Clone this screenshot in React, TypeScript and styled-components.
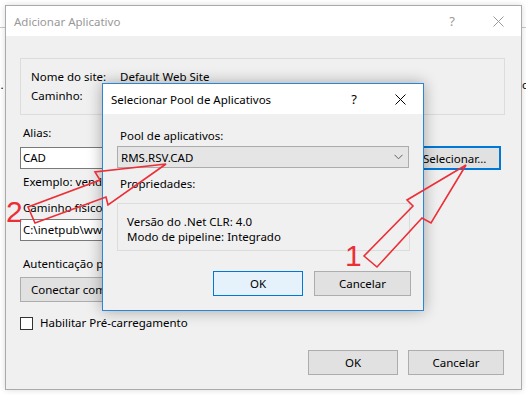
import styled, { createGlobalStyle } from "styled-components";

const GlobalStyle = createGlobalStyle`
  html, body {
    margin: 0;
    padding: 0;
    background: #ffffff;
  }
  body {
    font-family: "Noto Sans", "Open Sans", sans-serif;
    font-size: 11.5px;
    color: #000;
  }
`;

const Desktop = styled.div`
  position: relative;
  width: 526px;
  height: 395px;
  overflow: hidden;
  background: #ffffff;
`;

const BackWindow = styled.div`
  position: absolute;
  left: -20px;
  top: 27px;
  width: 570px;
  height: 400px;
  border-top: 1px solid #c8c8c8;
  background: #ffffff;
`;

const BackText = styled.span<{ $left: number }>`
  position: absolute;
  top: 77px;
  left: ${({ $left }) => $left}px;
  line-height: 16px;
`;

const Window = styled.div<{ $active?: boolean }>`
  position: absolute;
  display: flex;
  flex-direction: column;
  box-sizing: border-box;
  background: #f0f0f0;
  border: 1px solid ${({ $active }) => ($active ? "#2b86d8" : "#aaaaaa")};
  box-shadow: ${({ $active }) =>
    $active ? "0 0 14px rgba(0, 0, 0, 0.32)" : "0 0 6px rgba(0, 0, 0, 0.15)"};
`;

const MainWindow = styled(Window)`
  left: 5px;
  top: 5px;
  width: 517px;
  height: 385px;
`;

const PoolWindow = styled(Window)`
  left: 102px;
  top: 83px;
  width: 322px;
  height: 228px;
`;

const TitleBar = styled.div<{ $active?: boolean }>`
  display: flex;
  align-items: center;
  height: 30px;
  flex-shrink: 0;
  background: #ffffff;
  color: ${({ $active }) => ($active ? "#000" : "#999")};
`;

const Title = styled.span`
  flex: 1;
  padding-left: 8px;
  font-size: 11.5px;
`;

const CaptionButton = styled.div`
  width: 46px;
  height: 30px;
  display: flex;
  align-items: center;
  justify-content: center;
  font-size: 13px;
`;

const Body = styled.div<{ $pad: string }>`
  display: flex;
  flex-direction: column;
  flex: 1;
  padding: ${({ $pad }) => $pad};
`;

const GroupBox = styled.div`
  display: grid;
  grid-template-columns: 89px 1fr;
  grid-auto-rows: 19px;
  align-items: center;
  width: 485px;
  height: 57px;
  box-sizing: border-box;
  padding: 8px 0 0 10px;
  border: 1px solid #dcdcdc;
`;

const Label = styled.div<{ $top: number; $indent?: number }>`
  margin-top: ${({ $top }) => $top}px;
  padding-left: ${({ $indent }) => $indent ?? 3}px;
  line-height: 16px;
  white-space: nowrap;
`;

const Row = styled.div<{ $top: number }>`
  display: flex;
  align-items: center;
  gap: 10px;
  margin-top: ${({ $top }) => $top}px;
`;

const TextBox = styled.div<{ $width: number }>`
  width: ${({ $width }) => $width}px;
  height: 22px;
  box-sizing: border-box;
  border: 1px solid #7a7a7a;
  background: #ffffff;
  padding-left: 2px;
  line-height: 20px;
  white-space: nowrap;
  overflow: hidden;
`;

const Button = styled.div<{
  $width: number;
  $height?: number;
  $focus?: "strong" | "soft";
  $align?: "left" | "center";
}>`
  width: ${({ $width }) => $width}px;
  height: ${({ $height }) => $height ?? 24}px;
  box-sizing: border-box;
  display: flex;
  align-items: center;
  justify-content: ${({ $align }) => ($align === "left" ? "flex-start" : "center")};
  padding-left: ${({ $align }) => ($align === "left" ? "1px" : "0")};
  white-space: nowrap;
  background: ${({ $focus }) => ($focus === "soft" ? "#e5f1fb" : "#e1e1e1")};
  border: ${({ $focus }) =>
    $focus === "strong"
      ? "2px solid #0078d7"
      : $focus === "soft"
      ? "1px solid #0078d7"
      : "1px solid #adadad"};
`;

const ButtonBar = styled.div<{ $top: number; $right: number; $gap: number }>`
  display: flex;
  justify-content: flex-end;
  gap: ${({ $gap }) => $gap}px;
  margin-top: ${({ $top }) => $top}px;
  padding-right: ${({ $right }) => $right}px;
`;

const CheckRow = styled.label`
  display: flex;
  align-items: center;
  gap: 7px;
  margin-top: 13px;
  line-height: 16px;
`;

const CheckBox = styled.span`
  width: 13px;
  height: 13px;
  box-sizing: border-box;
  border: 1px solid #333333;
  background: #ffffff;
`;

const Select = styled.div`
  display: flex;
  align-items: center;
  justify-content: space-between;
  width: 292px;
  height: 22px;
  box-sizing: border-box;
  margin-top: 2px;
  padding: 0 5px 0 3px;
  background: #e5e5e5;
  border: 1px solid #acacac;
`;

const PropsBox = styled.div`
  width: 293px;
  height: 48px;
  box-sizing: border-box;
  margin-top: 11px;
  padding: 10px 0 0 9px;
  border: 1px solid #dcdcdc;
  line-height: 15px;
`;

const Overlay = styled.svg`
  position: absolute;
  left: 0;
  top: 0;
  pointer-events: none;
`;

const CloseIcon = () => (
  <svg width="11" height="11" viewBox="0 0 11 11">
    <path d="M0.5 0.5 L10.5 10.5 M10.5 0.5 L0.5 10.5" stroke="currentColor" strokeWidth="1" />
  </svg>
);

const Chevron = () => (
  <svg width="9" height="6" viewBox="0 0 9 6">
    <path d="M0.5 0.8 L4.5 4.8 L8.5 0.8" fill="none" stroke="#606060" strokeWidth="1" />
  </svg>
);

export default function App() {
  return (
    <>
      <GlobalStyle />
      <Desktop>
        <BackWindow />
        <BackText $left={-6}>a.</BackText>
        <BackText $left={522}>c</BackText>

        <MainWindow>
          <TitleBar>
            <Title>Adicionar Aplicativo</Title>
            <CaptionButton>?</CaptionButton>
            <CaptionButton>
              <CloseIcon />
            </CaptionButton>
          </TitleBar>
          <Body $pad="22px 0 0 14px">
            <GroupBox>
              <span>Nome do site:</span>
              <span>Default Web Site</span>
              <span>Caminho:</span>
              <span />
            </GroupBox>

            <Label $top={10}>Alias:</Label>
            <Row $top={5}>
              <TextBox $width={390}>CAD</TextBox>
              <Button $width={81} $height={24} $focus="strong" $align="left">
                Selecionar...
              </Button>
            </Row>
            <Label $top={4}>Exemplo: vendas</Label>

            <Label $top={10}>Caminho físico:</Label>
            <Row $top={3}>
              <TextBox $width={300}>C:\inetpub\wwwroot</TextBox>
            </Row>

            <Label $top={15}>Autenticação passada</Label>
            <Row $top={5}>
              <Button $width={130} $height={25} $align="left">
                &nbsp;&nbsp;&nbsp;Conectar como...
              </Button>
            </Row>

            <CheckRow>
              <CheckBox />
              Habilitar Pré-carregamento
            </CheckRow>

            <ButtonBar $top={19} $right={17} $gap={10}>
              <Button $width={90} $height={25}>OK</Button>
              <Button $width={96} $height={25}>Cancelar</Button>
            </ButtonBar>
          </Body>
        </MainWindow>

        <PoolWindow $active>
          <TitleBar $active>
            <Title>Selecionar Pool de Aplicativos</Title>
            <CaptionButton>?</CaptionButton>
            <CaptionButton>
              <CloseIcon />
            </CaptionButton>
          </TitleBar>
          <Body $pad="14px 0 0 14px">
            <Label $top={0}>Pool de aplicativos:</Label>
            <Select>
              <span>RMS.RSV.CAD</span>
              <Chevron />
            </Select>
            <Label $top={8}>Propriedades:</Label>
            <PropsBox>
              <div>Versão do .Net CLR: 4.0</div>
              <div>Modo de pipeline: Integrado</div>
            </PropsBox>
            <ButtonBar $top={20} $right={12} $gap={11}>
              <Button $width={90} $height={25} $focus="soft">OK</Button>
              <Button $width={97} $height={25}>Cancelar</Button>
            </ButtonBar>
          </Body>
        </PoolWindow>

        <Overlay width="526" height="395" viewBox="0 0 526 395">
          <g fill="none" stroke="#ec2f37" strokeWidth="1.6" strokeLinejoin="miter">
            <polygon points="466,165 407,200 413,206 364,256 377,267 422,218 431,223" />
            <polygon points="166,164 95,172 100,180 28,207 35,223 106,197 108,205" />
          </g>
          <g fill="#ec2f37" fontFamily="'Liberation Sans', sans-serif" fontSize="30">
            <text x="345" y="266">1</text>
            <text x="6" y="222">2</text>
          </g>
        </Overlay>
      </Desktop>
    </>
  );
}
